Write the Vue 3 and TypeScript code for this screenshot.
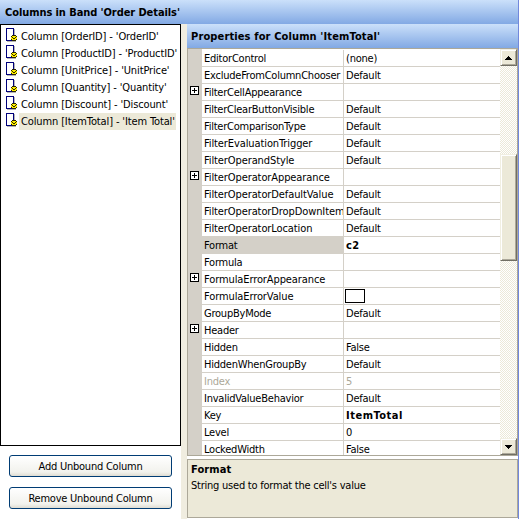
<script setup lang="ts">
interface Property {
  name: string
  value?: string
  expandable?: boolean
  bold?: boolean
  disabled?: boolean
  selected?: boolean
  swatch?: boolean
  wide?: boolean
}

const columns: { text: string; selected?: boolean }[] = [
  { text: "Column [OrderID] - 'OrderID'" },
  { text: "Column [ProductID] - 'ProductID'" },
  { text: "Column [UnitPrice] - 'UnitPrice'" },
  { text: "Column [Quantity] - 'Quantity'" },
  { text: "Column [Discount] - 'Discount'" },
  { text: "Column [ItemTotal] - 'Item Total'", selected: true },
]

const properties: Property[] = [
  { name: 'EditorControl', value: '(none)' },
  { name: 'ExcludeFromColumnChooser', value: 'Default' },
  { name: 'FilterCellAppearance', expandable: true },
  { name: 'FilterClearButtonVisible', value: 'Default' },
  { name: 'FilterComparisonType', value: 'Default' },
  { name: 'FilterEvaluationTrigger', value: 'Default', wide: true },
  { name: 'FilterOperandStyle', value: 'Default', wide: true },
  { name: 'FilterOperatorAppearance', expandable: true, wide: true },
  { name: 'FilterOperatorDefaultValue', value: 'Default', wide: true },
  { name: 'FilterOperatorDropDownItem', value: 'Default', wide: true },
  { name: 'FilterOperatorLocation', value: 'Default', wide: true },
  { name: 'Format', value: 'c2', bold: true, selected: true },
  { name: 'Formula' },
  { name: 'FormulaErrorAppearance', expandable: true, wide: true },
  { name: 'FormulaErrorValue', swatch: true, wide: true },
  { name: 'GroupByMode', value: 'Default' },
  { name: 'Header', expandable: true },
  { name: 'Hidden', value: 'False' },
  { name: 'HiddenWhenGroupBy', value: 'Default' },
  { name: 'Index', value: '5', disabled: true },
  { name: 'InvalidValueBehavior', value: 'Default' },
  { name: 'Key', value: 'ItemTotal', bold: true },
  { name: 'Level', value: '0' },
  { name: 'LockedWidth', value: 'False' },
]
</script>

<template>
  <div class="window">
    <header class="title">Columns in Band 'Order Details'</header>
    <div class="body">
      <section class="left">
        <ul class="columns">
          <li v-for="c in columns" :key="c.text">
            <svg class="icon" width="12" height="14" viewBox="0 0 12 14" shape-rendering="crispEdges">
              <path d="M1 13h9v1H1zM8 1h1v12H8z" fill="#b5b5b5" />
              <path d="M0 0h8v13H0z" fill="#00007b" />
              <path d="M1 1h6v11H1z" fill="#fff" />
              <path d="M6 7h4v1h1v4h-1v1H6v-1H5V8h1z" fill="#2a2600" />
              <path d="M6 8h4v4H6zM5 9h1v2H5zM10 9h1v2h-1z" fill="#ffef00" />
              <path d="M6 9h1v1H6zM9 9h1v1H9zM7 10h2v1H7z" fill="#2a2600" />
            </svg>
            <span :class="['caption', { selected: c.selected }]">{{ c.text }}</span>
          </li>
        </ul>
        <div class="actions">
          <button type="button">Add Unbound Column</button>
          <button type="button">Remove Unbound Column</button>
        </div>
      </section>
      <div class="splitter"></div>
      <section class="right">
        <header class="title subtitle">Properties for Column 'ItemTotal'</header>
        <div class="grid">
          <div class="rows">
            <div
              v-for="p in properties"
              :key="p.name"
              :class="['row', { selected: p.selected, disabled: p.disabled }]"
            >
              <div class="gutter">
                <svg v-if="p.expandable" width="9" height="9" shape-rendering="crispEdges">
                  <path d="M.5.5h8v8h-8z" fill="#fff" stroke="#000" />
                  <path d="M2 4h5v1H2zM4 2h1v5H4z" />
                </svg>
              </div>
              <div :class="['name', { wide: p.wide }]">{{ p.name }}</div>
              <div :class="['value', { bold: p.bold }]">
                <span v-if="p.swatch" class="swatch"></span>
                <template v-else>{{ p.value }}</template>
              </div>
            </div>
          </div>
          <div class="scrollbar">
            <div class="raised arrow">
              <svg width="7" height="4" shape-rendering="crispEdges">
                <path d="M3 0h1v1h1v1h1v1h1v1H0V3h1V2h1V1h1z" />
              </svg>
            </div>
            <div class="track before"></div>
            <div class="raised thumb"></div>
            <div class="track after"></div>
            <div class="raised arrow">
              <svg width="7" height="4" shape-rendering="crispEdges">
                <path d="M0 0h7v1H6v1H5v1H4v1H3V3H2V2H1V1H0z" />
              </svg>
            </div>
          </div>
        </div>
        <div class="help">
          <strong>Format</strong>
          <p>String used to format the cell's value</p>
        </div>
      </section>
    </div>
  </div>
</template>

<style>
body {
  background: #fff;
  overflow: hidden;
}
</style>

<style scoped>
.window {
  box-sizing: border-box;
  width: 519px;
  height: 519px;
  display: flex;
  flex-direction: column;
  border-right: 1px solid #7288dc;
  background: #fff;
  color: #000;
  font-family: Tahoma, 'DejaVu Sans Condensed', 'DejaVu Sans', sans-serif;
  font-stretch: condensed;
  font-size: 11px;
  letter-spacing: -0.23px;
  line-height: 17px;
  white-space: nowrap;
}
.title {
  box-sizing: border-box;
  height: 24px;
  flex: none;
  padding: 4px 0 0 5px;
  background: linear-gradient(#cbe0fa, #82a9e4);
  font-weight: bold;
  letter-spacing: -0.08px;
}
.subtitle {
  padding-left: 4px;
  letter-spacing: 0.13px;
}
.body {
  display: flex;
  flex: 1;
  min-height: 0;
}
.left {
  width: 181px;
  display: flex;
  flex-direction: column;
}
.columns {
  box-sizing: border-box;
  height: 422px;
  margin: 0;
  padding: 3px 0 0 5px;
  border: 1px solid #000;
  list-style: none;
}
.columns li {
  display: flex;
  height: 17px;
  letter-spacing: -0.13px;
}
.caption {
  margin-left: 1px;
  padding: 0 1px 0 2px;
}
.caption.selected {
  background: #ece9d8;
}
.actions {
  display: flex;
  flex-direction: column;
  gap: 10px;
  padding: 9px 9px 0;
}
button {
  height: 22px;
  padding: 0;
  border: 1px solid #003c74;
  border-radius: 3px;
  background: linear-gradient(#fff, #f2f2ed 80%, #dfdcd2);
  color: #000;
  font: inherit;
  letter-spacing: inherit;
}
.splitter {
  width: 6px;
  background: #f0ede0;
}
.right {
  flex: 1;
  min-width: 0;
  display: flex;
  flex-direction: column;
}
.grid {
  box-sizing: border-box;
  height: 408px;
  display: flex;
  border: 1px solid #aca899;
  overflow: hidden;
}
.rows {
  flex: 1;
  min-width: 0;
  padding-top: 1px;
  background: linear-gradient(90deg, #d4d0c8 14px, #fff 14px);
}
.row {
  display: grid;
  grid-template-columns: 14px 141px 1fr;
  height: 17px;
}
.gutter {
  padding: 2px 0 0 2px;
  line-height: 0;
}
.name,
.value {
  box-sizing: border-box;
  height: 17px;
  line-height: 17px;
  padding-left: 2px;
  border-bottom: 1px solid #d4d0c8;
  overflow: hidden;
}
.name.wide {
  letter-spacing: -0.1px;
}
.value {
  border-left: 1px solid #d4d0c8;
}
.row.selected .name {
  background: #d4d0c8;
}
.row.disabled {
  color: #aca899;
}
.value.bold {
  font-weight: bold;
  letter-spacing: 0.5px;
}
.swatch {
  display: block;
  box-sizing: border-box;
  width: 20px;
  height: 14px;
  margin: 1px 0 0 -1px;
  border: 1px solid #000;
}
.scrollbar {
  width: 17px;
  display: flex;
  flex-direction: column;
}
.track {
  background: repeating-conic-gradient(#ece9d8 0 25%, #fff 0 50%) 0 0 / 2px 2px;
}
.track.before {
  height: 88px;
}
.track.after {
  flex: 1;
}
.raised {
  box-sizing: border-box;
  flex: none;
  height: 17px;
  border: 1px solid;
  border-color: #f1efe2 #716f64 #716f64 #f1efe2;
  background: #ece9d8;
  box-shadow: inset 1px 1px #fff, inset -1px -1px #aca899;
}
.raised.thumb {
  height: 107px;
}
.arrow {
  display: flex;
  align-items: center;
  justify-content: center;
}
.help {
  box-sizing: border-box;
  height: 59px;
  margin-top: 3px;
  padding: 1px 3px;
  border: 1px solid #aca899;
  background: #ece9d8;
}
.help strong {
  display: block;
  height: 16px;
  letter-spacing: 0.1px;
}
.help p {
  margin: 0;
}
</style>
